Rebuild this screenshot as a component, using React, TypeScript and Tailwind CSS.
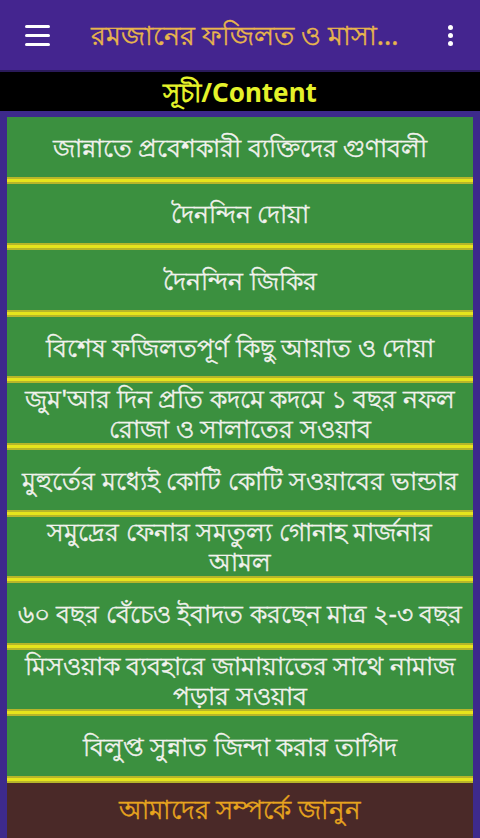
const items: string[][] = [
  ["জান্নাতে প্রবেশকারী ব্যক্তিদের গুণাবলী"],
  ["দৈনন্দিন দোয়া"],
  ["দৈনন্দিন জিকির"],
  ["বিশেষ ফজিলতপূর্ণ কিছু আয়াত ও দোয়া"],
  ["জুম'আর দিন প্রতি কদমে কদমে ১ বছর নফল", "রোজা ও সালাতের সওয়াব"],
  ["মুহুর্তের মধ্যেই কোটি কোটি সওয়াবের ভান্ডার"],
  ["সমুদ্রের ফেনার সমতুল্য গোনাহ মার্জনার", "আমল"],
  ["৬০ বছর বেঁচেও ইবাদত করছেন মাত্র ২-৩ বছর"],
  ["মিসওয়াক ব্যবহারে জামায়াতের সাথে নামাজ", "পড়ার সওয়াব"],
  ["বিলুপ্ত সুন্নাত জিন্দা করার তাগিদ"],
];

function Separator() {
  return (
    <div className="h-[7px] border-y-2 border-[#b7b52a] bg-[#e6e41c]" />
  );
}

export default function App() {
  return (
    <div
      className="w-[480px] h-[838px] overflow-hidden bg-[#3d2a8c] flex flex-col"
      style={{ fontFamily: '"Noto Sans", "Liberation Sans", sans-serif' }}
    >
      {/* App bar */}
      <header className="h-[70px] shrink-0 bg-[#44258f] flex items-center px-[25px]">
        <div className="flex flex-col gap-[6px] w-[25px]">
          <span className="h-[3px] bg-white rounded-sm" />
          <span className="h-[3px] bg-white rounded-sm" />
          <span className="h-[3px] bg-white rounded-sm" />
        </div>
        <h1 className="flex-1 text-center text-[27px] text-[#e8b64c] pl-[14px] whitespace-nowrap [-webkit-text-stroke:0.4px_#e8b64c]">
          রমজানের ফজিলত ও মাসা...
        </h1>
        <div className="flex flex-col gap-[3px] items-center w-[10px] ml-[20px]">
          <span className="w-[5px] h-[5px] rounded-full bg-white" />
          <span className="w-[5px] h-[5px] rounded-full bg-white" />
          <span className="w-[5px] h-[5px] rounded-full bg-white" />
        </div>
      </header>

      {/* Content heading */}
      <div className="h-[41px] shrink-0 bg-black border-t-2 border-[#2a1a5a] flex items-center justify-center">
        <span
          className="text-[26px] font-bold text-[#e4f22a] leading-none"
          style={{ fontFamily: '"Noto Sans", Roboto, "Liberation Sans", sans-serif' }}
        >
          সূচী/Content
        </span>
      </div>

      {/* List */}
      <div className="flex-1 px-[7px] pt-[6px] flex flex-col">
        {items.map((lines, i) => (
          <div key={i}>
            <div className="h-[59.6px] bg-[#3b903f] flex items-center justify-center">
              <p className="text-[#f2f2ee] text-[25px] leading-[30px] text-center whitespace-nowrap [-webkit-text-stroke:0.4px_#f2f2ee]">
                {lines.map((l, j) => (
                  <span key={j}>
                    {j > 0 && <br />}
                    {l}
                  </span>
                ))}
              </p>
            </div>
            <Separator />
          </div>
        ))}
        <div className="flex-1 bg-[#4a2928] flex items-center justify-center pb-[2px]">
          <span className="text-[26px] text-[#e8a51e] [-webkit-text-stroke:0.4px_#e8a51e]">
            আমাদের সম্পর্কে জানুন
          </span>
        </div>
      </div>
    </div>
  );
}
